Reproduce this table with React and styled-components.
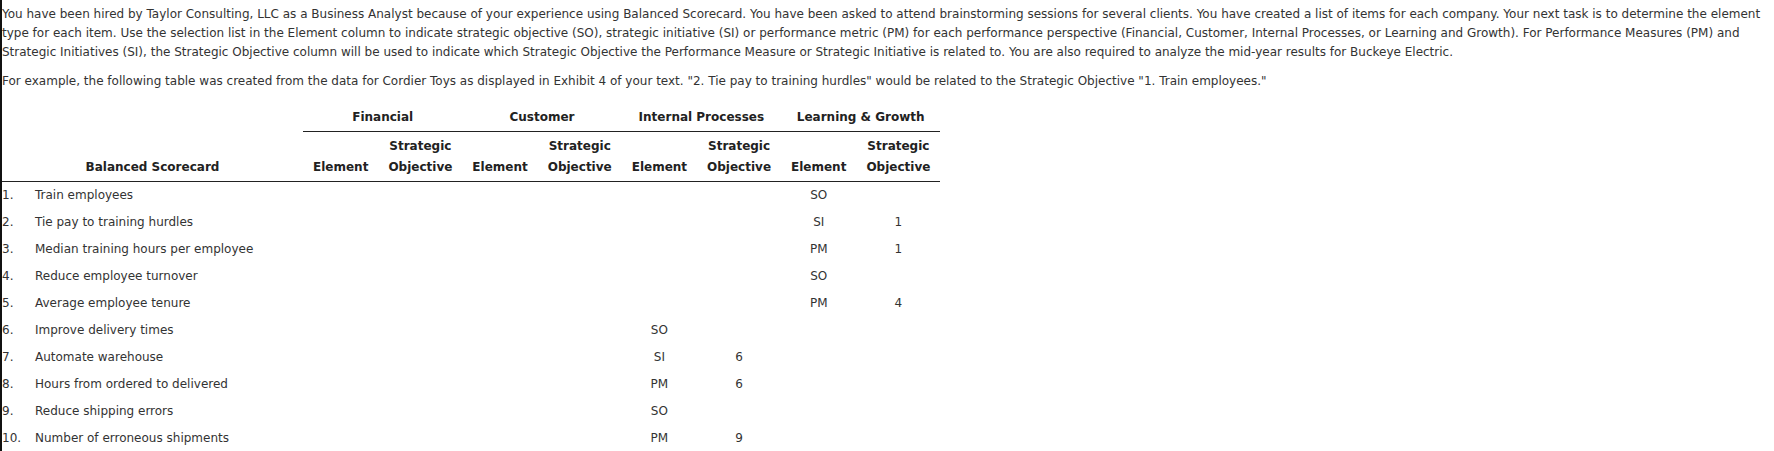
import styled, { createGlobalStyle } from "styled-components";

const GlobalStyle = createGlobalStyle`
  body {
    margin: 0;
    background: #fff;
  }
`;

const groups = ["Financial", "Customer", "Internal Processes", "Learning & Growth"];

const items = [
  { text: "Train employees", group: 3, element: "SO", objective: "" },
  { text: "Tie pay to training hurdles", group: 3, element: "SI", objective: "1" },
  { text: "Median training hours per employee", group: 3, element: "PM", objective: "1" },
  { text: "Reduce employee turnover", group: 3, element: "SO", objective: "" },
  { text: "Average employee tenure", group: 3, element: "PM", objective: "4" },
  { text: "Improve delivery times", group: 2, element: "SO", objective: "" },
  { text: "Automate warehouse", group: 2, element: "SI", objective: "6" },
  { text: "Hours from ordered to delivered", group: 2, element: "PM", objective: "6" },
  { text: "Reduce shipping errors", group: 2, element: "SO", objective: "" },
  { text: "Number of erroneous shipments", group: 2, element: "PM", objective: "9" },
];

export default function App() {
  return (
    <Page>
      <GlobalStyle />
      <Intro>
        You have been hired by Taylor Consulting, LLC as a Business Analyst because of your
        experience using Balanced Scorecard. You have been asked to attend brainstorming sessions
        for several clients. You have created a list of items for each company. Your next task is
        to determine the element type for each item. Use the selection list in the Element column
        to indicate strategic objective (SO), strategic initiative (SI) or performance metric (PM)
        for each performance perspective (Financial, Customer, Internal Processes, or Learning and
        Growth). For Performance Measures (PM) and Strategic Initiatives (SI), the Strategic
        Objective column will be used to indicate which Strategic Objective the Performance Measure
        or Strategic Initiative is related to. You are also required to analyze the mid-year
        results for Buckeye Electric.
      </Intro>
      <Example>
        For example, the following table was created from the data for Cordier Toys as displayed
        in Exhibit 4 of your text. "2. Tie pay to training hurdles" would be related to the
        Strategic Objective "1. Train employees."
      </Example>
      <Scorecard>
        <thead>
          <tr>
            <th colSpan={2} />
            {groups.map((g) => (
              <GroupTitle key={g} colSpan={2}>
                {g}
              </GroupTitle>
            ))}
          </tr>
          <tr>
            <ColTitle colSpan={2}>Balanced Scorecard</ColTitle>
            {groups.map((g) => [
              <ColTitle key={g + "e"}>Element</ColTitle>,
              <ColTitle key={g + "o"}>
                Strategic
                <br />
                Objective
              </ColTitle>,
            ])}
          </tr>
        </thead>
        <tbody>
          {items.map((item, index) => (
            <tr key={item.text}>
              <Num>{index + 1}.</Num>
              <Label>{item.text}</Label>
              {groups.map((g, gi) => [
                <Value key={g + "e"}>{gi === item.group ? item.element : ""}</Value>,
                <Value key={g + "o"}>{gi === item.group ? item.objective : ""}</Value>,
              ])}
            </tr>
          ))}
        </tbody>
      </Scorecard>
    </Page>
  );
}

const Page = styled.div`
  border-left: 2px solid #111;
  min-height: 451px;
  box-sizing: border-box;
  font-family: "DejaVu Sans", Verdana, sans-serif;
  font-size: 12px;
  color: #333;
  overflow: hidden;
`;

const Intro = styled.p`
  margin: 5px 0 0;
  line-height: 19px;
`;

const Example = styled.p`
  margin: 10px 0 0;
  line-height: 19px;
`;

const Scorecard = styled.table`
  margin-top: 13px;
  border-collapse: collapse;
`;

const GroupTitle = styled.th`
  padding: 4px 10px;
  line-height: 19px;
  font-weight: 700;
  color: #222;
  text-align: center;
  border-bottom: 1px solid #222;
  white-space: nowrap;
`;

const ColTitle = styled.th`
  padding: 4px 10px 3px;
  line-height: 21px;
  font-weight: 700;
  color: #222;
  text-align: center;
  vertical-align: bottom;
  border-bottom: 1px solid #222;
  white-space: nowrap;
`;

const Num = styled.td`
  width: 33px;
  padding: 4px 0;
  line-height: 19px;
  white-space: nowrap;
`;

const Label = styled.td`
  width: 268px;
  padding: 4px 0;
  line-height: 19px;
  white-space: nowrap;
`;

const Value = styled.td`
  padding: 4px 10px;
  line-height: 19px;
  text-align: center;
`;
